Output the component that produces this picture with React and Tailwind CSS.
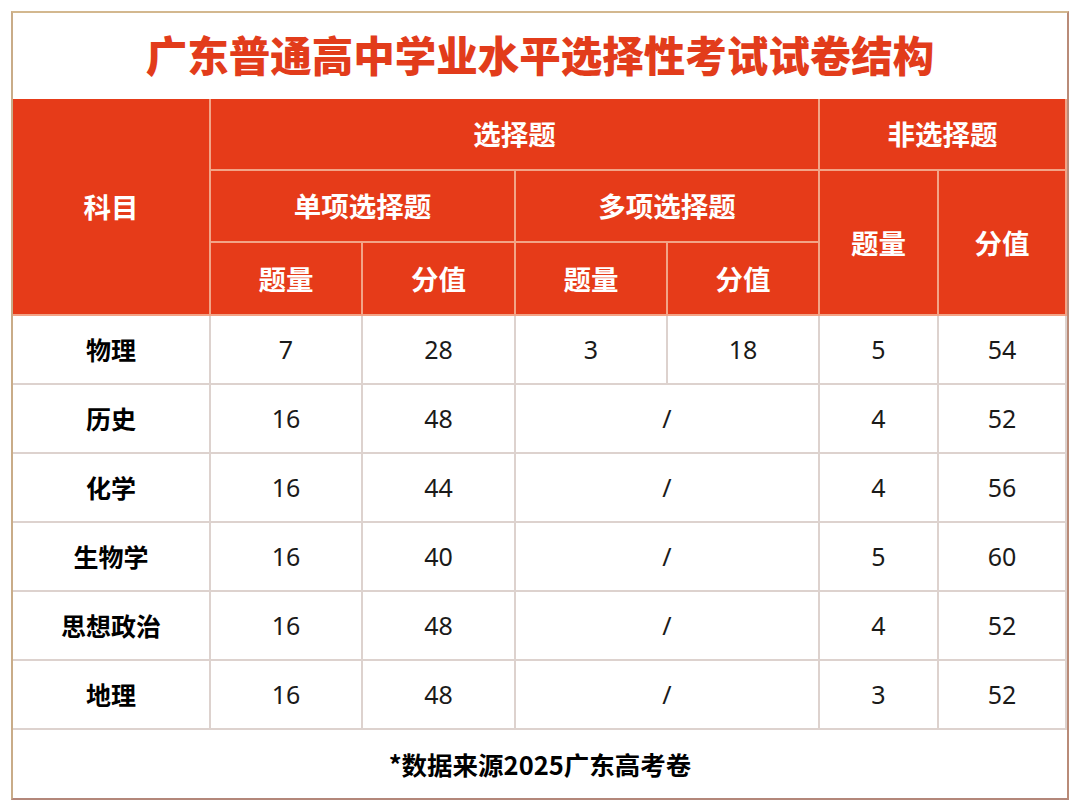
const headCell = 'flex items-center justify-center border-r-2 border-b-2 border-[#f2a487] bg-[#e63b19] text-white font-bold text-[27.5px]'
const bodyCell = 'flex items-center justify-center border-r-2 border-b-2 border-[#ddd2ce] text-[#1a1a1a] text-[25px]'

const rows = [
  ['物理', '7', '28', '3', '18', '5', '54'],
  ['历史', '16', '48', null, null, '4', '52'],
  ['化学', '16', '44', null, null, '4', '56'],
  ['生物学', '16', '40', null, null, '5', '60'],
  ['思想政治', '16', '48', null, null, '4', '52'],
  ['地理', '16', '48', null, null, '3', '52'],
]

export default function App() {
  return (
    <div className="w-[1080px] h-[811px] bg-white pt-[11px] pl-[11px]" style={{ fontFamily: '"Noto Sans", "Noto Sans CJK SC", sans-serif' }}>
      <div className="w-[1058px] h-[789px] flex flex-col border-2 border-t-[#d3b88f] border-l-[#c9ac88] border-r-[#b98b78] border-b-[#b3877a]">
        <div className="h-[86px] shrink-0 flex items-center justify-center pb-[4px]">
          <h1 className="text-[41.5px] font-black text-[#e23c1b]" style={{ fontFamily: '"Noto Sans CJK SC", sans-serif' }}>
            广东普通高中学业水平选择性考试试卷结构
          </h1>
        </div>
        <div className="grid grid-cols-[198px_152px_153px_152px_152px_119px_1fr] grid-rows-[72px_72px_73px_69px_69px_69px_69px_69px_69px_1fr] flex-1" style={{ fontFamily: '"Noto Sans CJK SC", sans-serif' }}>
          <div className={`${headCell} row-span-3`}>科目</div>
          <div className={`${headCell} col-span-4`}>选择题</div>
          <div className={`${headCell} col-span-2 border-r-0`}>非选择题</div>
          <div className={`${headCell} col-span-2`}>单项选择题</div>
          <div className={`${headCell} col-span-2`}>多项选择题</div>
          <div className={`${headCell} row-span-2`}>题量</div>
          <div className={`${headCell} row-span-2 border-r-0`}>分值</div>
          <div className={headCell}>题量</div>
          <div className={headCell}>分值</div>
          <div className={headCell}>题量</div>
          <div className={headCell}>分值</div>
          {rows.map((r) => (
            <div key={r[0]} className="contents">
              <div className={`${bodyCell} font-bold text-black`}>{r[0]}</div>
              <div className={bodyCell} style={{ fontFamily: '"Noto Sans", sans-serif' }}>{r[1]}</div>
              <div className={bodyCell} style={{ fontFamily: '"Noto Sans", sans-serif' }}>{r[2]}</div>
              {r[3] ? (
                <>
                  <div className={bodyCell} style={{ fontFamily: '"Noto Sans", sans-serif' }}>{r[3]}</div>
                  <div className={bodyCell} style={{ fontFamily: '"Noto Sans", sans-serif' }}>{r[4]}</div>
                </>
              ) : (
                <div className={`${bodyCell} col-span-2`} style={{ fontFamily: '"Noto Sans", sans-serif' }}>/</div>
              )}
              <div className={bodyCell} style={{ fontFamily: '"Noto Sans", sans-serif' }}>{r[5]}</div>
              <div className={`${bodyCell} border-r-0`} style={{ fontFamily: '"Noto Sans", sans-serif' }}>{r[6]}</div>
            </div>
          ))}
          <div className="col-span-7 flex items-center justify-center text-[25.5px] font-bold text-black">
            *数据来源2025广东高考卷
          </div>
        </div>
      </div>
    </div>
  )
}
